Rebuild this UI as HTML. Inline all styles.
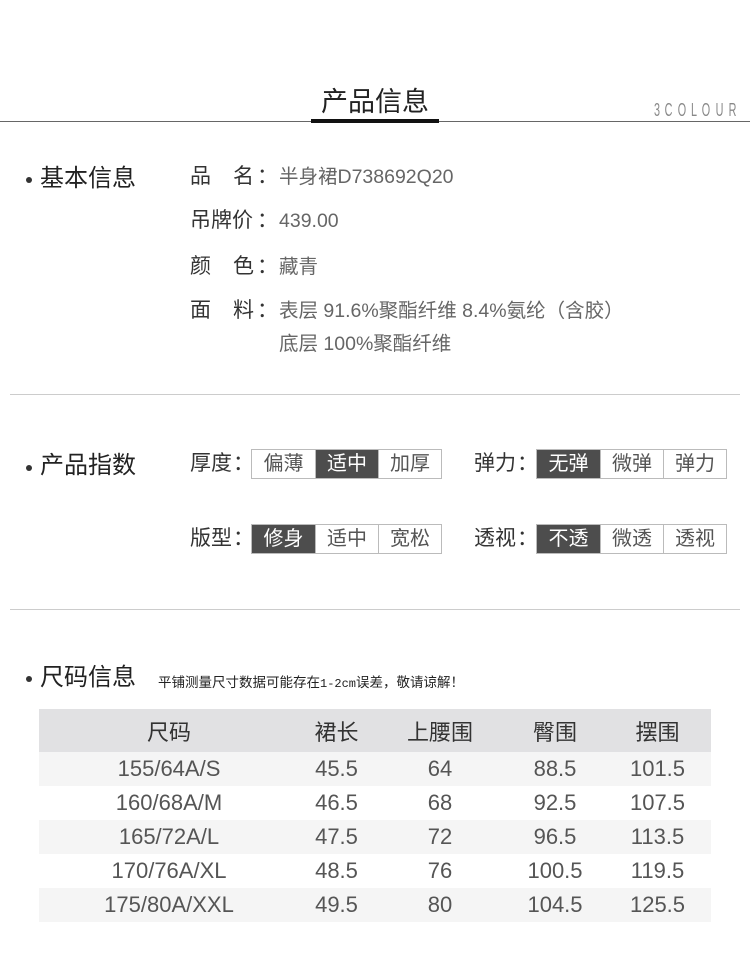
<!DOCTYPE html>
<html><head><meta charset="utf-8"><style>
*{margin:0;padding:0;box-sizing:border-box}
body{width:750px;height:967px;background:#fff;position:relative;overflow:hidden;font-family:"Liberation Sans","Noto Sans CJK SC",sans-serif;color:#333}
.a{position:absolute;white-space:nowrap}
.lb{font-size:21px;color:#333;line-height:26px}
.v{font-size:19.5px;color:#666;line-height:26px}
.h{font-size:24px;color:#222;line-height:30px}
.dot{position:absolute;width:6px;height:6px;border-radius:3px;background:#333}
.sep{position:absolute;left:10px;width:730px;height:1px;background:#ccc}
.grp{position:absolute;display:flex;border:1px solid #bbb;height:30px}
.grp div{width:63px;text-align:center;font-size:20px;line-height:28px;color:#555;border-left:1px solid #bbb}
.grp div:first-child{border-left:none}
.grp .on{background:#4d4d4d;color:#fff}
table{position:absolute;left:39px;top:709px;width:672px;border-collapse:collapse;font-size:22px;color:#555}
td{text-align:center;height:34px;padding:0}
tr.hd td{height:43px;background:#e1e1e3;color:#333}
tr.g td{background:#f5f5f5}
.logo{position:absolute;left:652px;top:100px;width:87px;display:flex;justify-content:space-between;font-size:18px;color:#888}
.logo span{display:inline-block;transform:scaleX(0.6)}
</style></head><body>
<div class="a" style="left:0;top:80px;width:750px;text-align:center;font-size:27px;color:#222">产品信息</div>
<div class="a" style="left:0;top:121px;width:750px;height:1px;background:#666"></div>
<div class="a" style="left:311px;top:119px;width:128px;height:4px;background:#111"></div>
<div class="logo"><span>3</span><span>C</span><span>O</span><span>L</span><span>O</span><span>U</span><span>R</span></div>

<div class="dot" style="left:26px;top:177px"></div>
<div class="a h" style="left:40px;top:164px">基本信息</div>
<div class="a lb" style="left:190px;top:164px">品</div><div class="a lb" style="left:233px;top:164px">名</div><div class="a lb" style="left:257px;top:164px">：</div>
<div class="a v" style="left:279px;top:164px">半身裙D738692Q20</div>
<div class="a lb" style="left:190px;top:208px">吊牌价</div><div class="a lb" style="left:257px;top:208px">：</div>
<div class="a v" style="left:279px;top:208px">439.00</div>
<div class="a lb" style="left:190px;top:254px">颜</div><div class="a lb" style="left:233px;top:254px">色</div><div class="a lb" style="left:257px;top:254px">：</div>
<div class="a v" style="left:279px;top:254px">藏青</div>
<div class="a lb" style="left:190px;top:298px">面</div><div class="a lb" style="left:233px;top:298px">料</div><div class="a lb" style="left:257px;top:298px">：</div>
<div class="a v" style="left:279px;top:298px">表层 91.6%聚酯纤维 8.4%氨纶（含胶）</div>
<div class="a v" style="left:279px;top:331px">底层 100%聚酯纤维</div>

<div class="sep" style="top:394px"></div>

<div class="dot" style="left:26px;top:465px"></div>
<div class="a h" style="left:40px;top:451px">产品指数</div>
<div class="a lb" style="left:190px;top:451px">厚度</div><div class="a lb" style="left:233px;top:451px">：</div>
<div class="grp" style="left:251px;top:449px"><div>偏薄</div><div class="on">适中</div><div>加厚</div></div>
<div class="a lb" style="left:474px;top:451px">弹力</div><div class="a lb" style="left:517px;top:451px">：</div>
<div class="grp" style="left:536px;top:449px"><div class="on">无弹</div><div>微弹</div><div>弹力</div></div>
<div class="a lb" style="left:190px;top:526px">版型</div><div class="a lb" style="left:233px;top:526px">：</div>
<div class="grp" style="left:251px;top:524px"><div class="on">修身</div><div>适中</div><div>宽松</div></div>
<div class="a lb" style="left:474px;top:526px">透视</div><div class="a lb" style="left:517px;top:526px">：</div>
<div class="grp" style="left:536px;top:524px"><div class="on">不透</div><div>微透</div><div>透视</div></div>

<div class="sep" style="top:609px"></div>

<div class="dot" style="left:26px;top:676px"></div>
<div class="a h" style="left:40px;top:663px">尺码信息</div>
<div class="a" style="left:158px;top:671px;font-size:13.5px;color:#222">平铺测量尺寸数据可能存在<span style="font-family:'Liberation Mono',monospace;font-size:12px">1-2cm</span>误差，敬请谅解！</div>

<table>
<tr class="hd"><td style="width:260px">尺码</td><td style="width:75px">裙长</td><td style="width:132px">上腰围</td><td style="width:98px">臀围</td><td>摆围</td></tr>
<tr class="g"><td>155/64A/S</td><td>45.5</td><td>64</td><td>88.5</td><td>101.5</td></tr>
<tr><td>160/68A/M</td><td>46.5</td><td>68</td><td>92.5</td><td>107.5</td></tr>
<tr class="g"><td>165/72A/L</td><td>47.5</td><td>72</td><td>96.5</td><td>113.5</td></tr>
<tr><td>170/76A/XL</td><td>48.5</td><td>76</td><td>100.5</td><td>119.5</td></tr>
<tr class="g"><td>175/80A/XXL</td><td>49.5</td><td>80</td><td>104.5</td><td>125.5</td></tr>
</table>
</body></html>
